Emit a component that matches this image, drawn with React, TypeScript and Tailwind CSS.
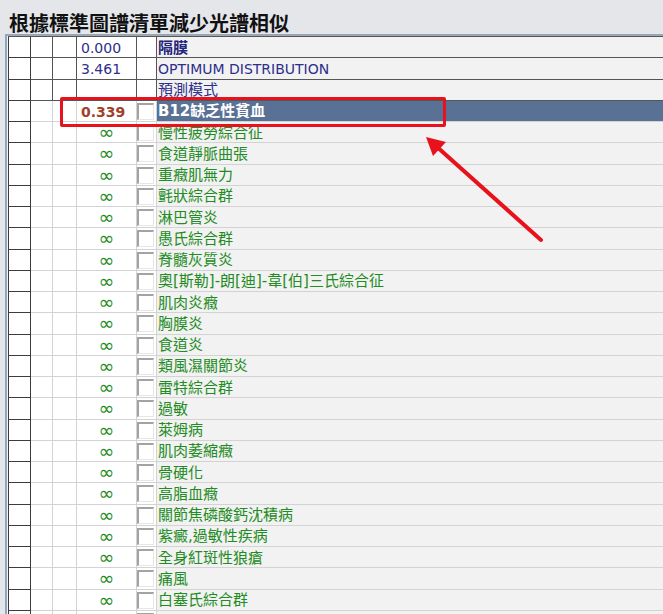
import React from "react";

// ── Row data ──

type Row = {
  value: string;
  name: string;
  kind: "top" | "top-bold" | "selected" | "normal";
  check?: boolean;
};

const NAMES = [
  "慢性疲勞綜合征",
  "食道靜脈曲張",
  "重癥肌無力",
  "氈狀綜合群",
  "淋巴管炎",
  "愚氏綜合群",
  "脊髓灰質炎",
  "奧[斯勒]-朗[迪]-韋[伯]三氏綜合征",
  "肌肉炎癥",
  "胸膜炎",
  "食道炎",
  "類風濕關節炎",
  "雷特綜合群",
  "過敏",
  "萊姆病",
  "肌肉萎縮癥",
  "骨硬化",
  "高脂血癥",
  "關節焦磷酸鈣沈積病",
  "紫癜,過敏性疾病",
  "全身紅斑性狼瘡",
  "痛風",
  "白塞氏綜合群",
];

const ROWS: Row[] = [
  { value: "0.000", name: "隔膜", kind: "top-bold" },
  { value: "3.461", name: "OPTIMUM DISTRIBUTION", kind: "top" },
  { value: "", name: "預測模式", kind: "top" },
  { value: "0.339", name: "B12缺乏性貧血", kind: "selected", check: true },
  ...NAMES.map((n) => ({ value: "∞", name: n, kind: "normal" as const, check: true })),
  // partly visible row below the fold
  { value: "", name: "", kind: "normal", check: true },
];

const FONT = { fontFamily: '"DejaVu Sans", "Noto Sans CJK TC", sans-serif' };

function CheckBox() {
  return (
    <div className="mt-[2px] w-[17px] h-[17px] bg-white border-l-2 border-t-2 border-[#a3a3a3] border-r border-b border-r-[#e6e6e6] border-b-[#e6e6e6]" />
  );
}

function GridRow({ row }: { row: Row }) {
  const top = row.kind === "top" || row.kind === "top-bold";
  const line = top ? "border-[#555]" : "border-[#d3d3d3]";

  let valueCls = "text-[#2e2e8c] pl-[4px] text-[14px]";
  if (row.kind === "selected") valueCls = "text-[#a13f2b] font-bold pl-[4px] text-[14px]";
  if (row.kind === "normal") valueCls = "text-[#228b22] justify-center text-[19px] pb-px";

  let nameCls = "text-[#2e2e8c]";
  if (row.kind === "top-bold") nameCls = "text-[#23237a] font-bold";
  if (row.kind === "selected") nameCls = "bg-[#5a7196] text-white font-bold";
  if (row.kind === "normal") nameCls = "text-[#228b22]";

  const isLatin = /^[A-Z ]+$/.test(row.name);

  return (
    <div className="flex h-[21.25px] shrink-0">
      <div className="w-[23px] border-l border-r border-b border-[#3c3c3c] bg-white" />
      <div className={`w-[22px] border-r border-b ${line} bg-white`} />
      <div className={`w-[24px] border-r border-b ${line} bg-white`} />
      <div className={`w-[60px] border-r border-b ${line} bg-white flex items-center pt-[2px] leading-none ${valueCls}`}>
        {row.value}
      </div>
      <div className={`w-[20px] border-r border-b ${line} bg-white`}>
        {row.check && <CheckBox />}
      </div>
      <div
        className={`flex-1 border-b ${row.kind === "selected" ? "border-[#d3d3d3]" : line} flex items-center pt-[2px] pl-px whitespace-nowrap leading-none ${isLatin ? "text-[14px]" : "text-[15px]"} ${nameCls}`}
      >
        {row.name}
      </div>
    </div>
  );
}

export default function App() {
  return (
    <div className="relative w-[663px] h-[614px] overflow-hidden bg-[#e4e6ea]" style={FONT}>
      <div
        className="h-[34px] pl-[9px] pt-[13px] text-[20px] leading-[20px] font-bold text-[#111] whitespace-nowrap"
        style={{ fontFamily: '"Noto Sans CJK TC", sans-serif' }}
      >
        根據標準圖譜清單減少光譜相似
      </div>

      <div className="ml-[5px] border-l-2 border-t border-[#8fa6c0]">
        <div className="border-t border-[#a8a8a8] pl-px bg-[#f2f2f2]">
          <div className="border-t border-[#555] flex flex-col">
            {ROWS.map((r, i) => (
              <GridRow key={i} row={r} />
            ))}
          </div>
        </div>
      </div>

      {/* highlight box */}
      <div className="absolute left-[60px] top-[97px] w-[386px] h-[30px] border-[3px] border-[#e8121c] rounded-[2px]" />

      {/* arrow */}
      <svg className="absolute left-0 top-0" width="663" height="614" viewBox="0 0 663 614">
        <line x1="541" y1="240" x2="436" y2="146" stroke="#e8121c" strokeWidth="4" strokeLinecap="round" />
        <polygon points="426,137 446,142 433,156" fill="#e8121c" />
      </svg>
    </div>
  );
}
